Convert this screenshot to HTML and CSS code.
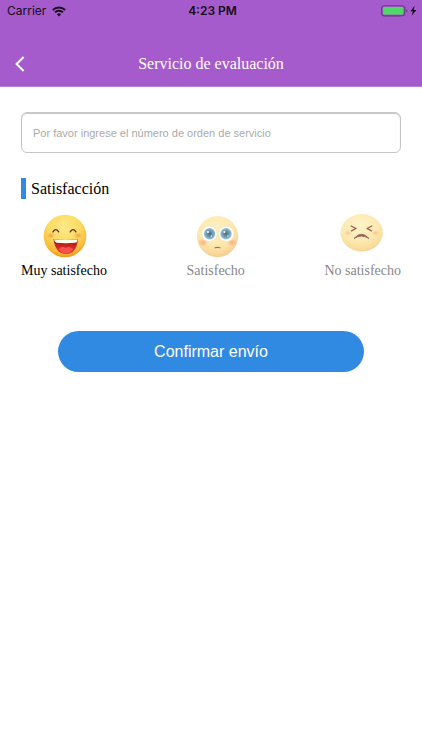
FILE: index.html
```html
<!DOCTYPE html>
<html lang="es">
<head>
<meta charset="utf-8">
<meta name="viewport" content="width=device-width, initial-scale=1">
<title>Servicio de evaluación</title>
<link rel="stylesheet" href="styles.css">
</head>
<body>
<header class="header">
  <div class="status">
    <div class="status-side">
      <span>Carrier</span>
      <svg width="14" height="11" viewBox="0 0 14 11" aria-hidden="true">
        <path d="M0.8 4a9 9 0 0 1 12.4 0M3 6.4a5.8 5.8 0 0 1 8 0" fill="none" stroke="#140b1b" stroke-width="1.9"/>
        <path d="M4.900 8.300a3.100 3.100 0 0 1 4.200 0L7 10.600z" fill="#140b1b"/>
      </svg>
    </div>
    <span class="status-time">4:23 PM</span>
    <div class="status-side status-right">
      <svg width="37" height="12" viewBox="0 0 37 12" aria-hidden="true">
        <rect x="0.7" y="0.7" width="23" height="10.2" rx="2.6" fill="none" stroke="#6a3a86" stroke-width="1.1"/>
        <rect x="2.1" y="2.1" width="20.2" height="7.4" rx="1.2" fill="#4cd964"/>
        <path d="M25.2 4v3.6q1.2-.5 1.2-1.8T25.2 4z" fill="#6a3a86"/>
        <path d="M33.6 0.8l-4.2 5.5h2.5l-1.2 4.5 4.6-5.9h-2.6z" fill="#140b1b"/>
      </svg>
    </div>
  </div>
  <div class="navbar">
    <button class="back" type="button" aria-label="Volver">
      <svg width="10" height="16" viewBox="0 0 10 16" aria-hidden="true"><path d="M8.600 1L1.600 8l7 7" fill="none" stroke="#fff" stroke-width="2"/></svg>
    </button>
    <h1 class="title">Servicio de evaluación</h1>
  </div>
</header>
<main>
  <form class="form">
    <input class="order" type="text" aria-label="Número de orden de servicio" placeholder="Por favor ingrese el número de orden de servicio">
    <fieldset class="rating">
      <legend class="heading">Satisfacción</legend>
      <div class="options">
        <label class="option">
          <input class="radio" type="radio" name="rating" checked>
          <svg class="face" viewBox="0 0 46 46" aria-hidden="true">
            <defs>
              <radialGradient id="happy" cx=".48" cy=".3" r=".74">
                <stop offset="0" stop-color="#ffe98a"/><stop offset=".5" stop-color="#fddb60"/><stop offset=".8" stop-color="#f9b938"/><stop offset="1" stop-color="#ee8c15"/>
              </radialGradient>
              <linearGradient id="mouth" x2="0" y2="1"><stop offset="0" stop-color="#8c1710"/><stop offset=".4" stop-color="#c8221e"/><stop offset="1" stop-color="#e93a34"/></linearGradient>
              <radialGradient id="cheek"><stop offset="0" stop-color="#f5773f" stop-opacity=".6"/><stop offset="1" stop-color="#f5773f" stop-opacity="0"/></radialGradient>
            </defs>
            <circle cx="24" cy="23" r="21.300" fill="url(#happy)"/>
            <ellipse cx="10" cy="22.500" rx="4.500" ry="3.200" fill="url(#cheek)"/>
            <ellipse cx="37" cy="22.500" rx="4.500" ry="3.200" fill="url(#cheek)"/>
            <path d="M12 18.800q2.800-4.300 5.700 0M29.200 18.800q2.800-4.300 5.700 0" fill="none" stroke="#6a3310" stroke-width="1.400" stroke-linecap="round"/>
            <path d="M12.500 26q12 2 24.500 0Q35.500 41 25 41 14.500 41 12.500 26z" fill="url(#mouth)"/>
            <path d="M12.900 26.200q11.700 1.600 23.800 0-.4 3.500-2.500 3.600-9.500.8-18.500 0-2-.5-2.800-3.600z" fill="#fffdf0"/>
            <path d="M17.500 36q3.500-3.300 7.200-1 3.800-2.300 7.500 1-2.500 4.300-7.200 4.300T17.500 36z" fill="#f4524a"/>
          </svg>
          <span>Muy satisfecho</span>
        </label>
        <label class="option">
          <input class="radio" type="radio" name="rating">
          <svg class="face" viewBox="0 0 46 46" aria-hidden="true">
            <defs>
              <radialGradient id="calm" cx=".45" cy=".3" r=".75">
                <stop offset="0" stop-color="#fff0c3"/><stop offset=".55" stop-color="#fde8b0"/><stop offset=".85" stop-color="#f9d597"/><stop offset="1" stop-color="#f3c080"/>
              </radialGradient>
              <radialGradient id="iris"><stop offset="0" stop-color="#4b6b80"/><stop offset=".45" stop-color="#6890aa"/><stop offset="1" stop-color="#97c3d8"/></radialGradient>
              <radialGradient id="blush"><stop offset="0" stop-color="#f5926f" stop-opacity=".6"/><stop offset="1" stop-color="#f5926f" stop-opacity="0"/></radialGradient>
            </defs>
            <circle cx="24.500" cy="23.500" r="20.500" fill="url(#calm)"/>
            <ellipse cx="10" cy="29.500" rx="5.500" ry="4" fill="url(#blush)"/>
            <ellipse cx="39" cy="29.500" rx="5.500" ry="4" fill="url(#blush)"/>
            <circle cx="16.300" cy="20.700" r="7.800" fill="#fffef8" stroke="#eedfae" stroke-width=".6"/>
            <circle cx="33.300" cy="20.700" r="7.800" fill="#fffef8" stroke="#eedfae" stroke-width=".6"/>
            <circle cx="16.600" cy="20.700" r="5.700" fill="url(#iris)"/>
            <circle cx="33" cy="20.700" r="5.700" fill="url(#iris)"/>
            <circle cx="15" cy="19" r="1" fill="#fff"/><circle cx="31.400" cy="19" r="1" fill="#fff"/>
            <circle cx="18.500" cy="23" r=".7" fill="#d8ebf2"/><circle cx="34.900" cy="23" r=".7" fill="#d8ebf2"/>
            <path d="M22 34.700q2.500-.8 5 0" fill="none" stroke="#a46d61" stroke-width="1.200" stroke-linecap="round"/>
          </svg>
          <span>Satisfecho</span>
        </label>
        <label class="option">
          <input class="radio" type="radio" name="rating">
          <svg class="face" viewBox="0 0 46 46" aria-hidden="true">
            <defs>
              <radialGradient id="upset" cx=".45" cy=".3" r=".75">
                <stop offset="0" stop-color="#fff3c8"/><stop offset=".55" stop-color="#fdeab2"/><stop offset=".85" stop-color="#f9dc9b"/><stop offset="1" stop-color="#f2ca87"/>
              </radialGradient>
            </defs>
            <ellipse cx="21.700" cy="19.700" rx="21.200" ry="18.700" fill="url(#upset)"/>
            <ellipse cx="8" cy="20" rx="4.500" ry="3" fill="url(#blush)" opacity=".7"/>
            <ellipse cx="35.500" cy="20" rx="4.500" ry="3" fill="url(#blush)" opacity=".7"/>
            <path d="M11.200 13l4.800 2.500-4.500 2.300M31.800 13L27 15.500l4.500 2.300" fill="none" stroke="#9c6257" stroke-width="1.400" stroke-linecap="round" stroke-linejoin="round"/>
            <path d="M14 25.500q7.500-8.500 15 0-7.500-4.800-15 0z" fill="#9c6257" stroke="#9c6257" stroke-width=".9" stroke-linejoin="round"/>
          </svg>
          <span>No satisfecho</span>
        </label>
      </div>
    </fieldset>
    <button class="submit" type="button">Confirmar envío</button>
  </form>
</main>
</body>
</html>
```
FILE: styles.css
```css
* {
  box-sizing: border-box;
}

body {
  margin: 0;
  background: #fff;
  color: #000;
  font-family: "Liberation Serif", serif;
}

.header {
  background: #a65bcc;
  border-bottom: 1px solid #b77fd6;
}

.status {
  display: flex;
  align-items: center;
  height: 22px;
  padding: 0 4px 0 7px;
  color: #140b1b;
  font: 12px/22px Inter, sans-serif;
}

.status-side {
  display: flex;
  flex: 1;
  align-items: center;
  gap: 6px;
}

.status-right {
  justify-content: flex-end;
}

.status-time {
  font-weight: 600;
}

.navbar {
  display: grid;
  grid-template-columns: 40px 1fr 40px;
  align-items: center;
  height: 64px;
  padding-top: 20px;
}

.back {
  display: flex;
  align-items: center;
  height: 40px;
  padding: 0 0 0 15px;
  border: 0;
  background: none;
}

.title {
  margin: 0;
  color: #fff;
  font-size: 16px;
  font-weight: 400;
  text-align: center;
}

.form {
  padding: 25px 21px;
}

.order {
  display: block;
  width: 100%;
  height: 41px;
  padding: 0 11px;
  border: 1px solid #c8c5c8;
  border-radius: 6px;
  background: #fff;
  box-shadow: inset 0 1px 1px #c8c5c8;
  font: 11px "Liberation Sans", sans-serif;
}

.order::placeholder {
  color: #aaa;
  opacity: 1;
}

.rating {
  min-width: 0;
  margin: 25px 0 0;
  padding: 0;
  border: 0;
}

.heading {
  padding: 0 0 0 5px;
  border-left: 5px solid #318ae2;
  font-size: 16px;
  line-height: 21px;
}

.options {
  display: flex;
  justify-content: space-between;
  padding-top: 14px;
}

.option {
  display: flex;
  flex-direction: column;
  align-items: center;
  gap: 4px;
  color: #888;
  font-size: 14px;
  line-height: 16px;
}

.option:has(.radio:checked) {
  color: #000;
}

.radio {
  position: absolute;
  opacity: 0;
}

.face {
  width: 46px;
  height: 46px;
}

.submit {
  display: block;
  width: 306px;
  max-width: 100%;
  height: 41px;
  margin: 52px auto 0;
  border: 0;
  border-radius: 21px;
  background: #318ae2;
  color: #fff;
  font: 16px "Liberation Sans", sans-serif;
}
```
